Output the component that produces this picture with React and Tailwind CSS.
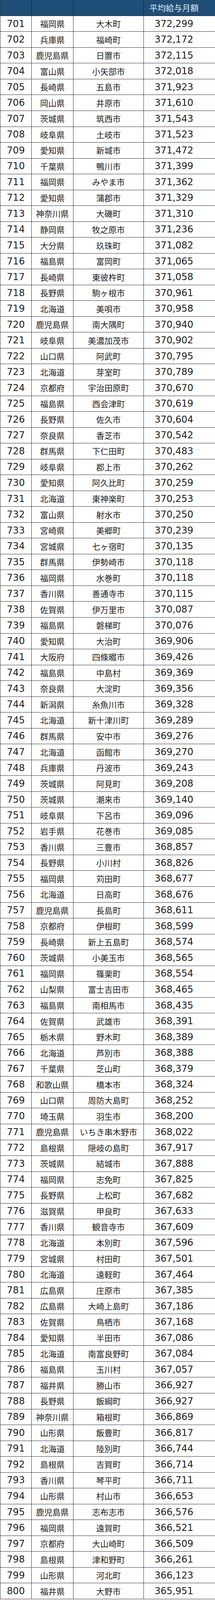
import React from 'react';

// 平均給与月額ランキング 701〜800位
const rows = [
  ['福岡県', '大木町', '372,299'],
  ['兵庫県', '福崎町', '372,172'],
  ['鹿児島県', '日置市', '372,115'],
  ['富山県', '小矢部市', '372,018'],
  ['長崎県', '五島市', '371,923'],
  ['岡山県', '井原市', '371,610'],
  ['茨城県', '筑西市', '371,543'],
  ['岐阜県', '土岐市', '371,523'],
  ['愛知県', '新城市', '371,472'],
  ['千葉県', '鴨川市', '371,399'],
  ['福岡県', 'みやま市', '371,362'],
  ['愛知県', '蒲郡市', '371,329'],
  ['神奈川県', '大磯町', '371,310'],
  ['静岡県', '牧之原市', '371,236'],
  ['大分県', '玖珠町', '371,082'],
  ['福島県', '富岡町', '371,065'],
  ['長崎県', '東彼杵町', '371,058'],
  ['長野県', '駒ヶ根市', '370,961'],
  ['北海道', '美唄市', '370,958'],
  ['鹿児島県', '南大隅町', '370,940'],
  ['岐阜県', '美濃加茂市', '370,902'],
  ['山口県', '阿武町', '370,795'],
  ['北海道', '芽室町', '370,789'],
  ['京都府', '宇治田原町', '370,670'],
  ['福島県', '西会津町', '370,619'],
  ['長野県', '佐久市', '370,604'],
  ['奈良県', '香芝市', '370,542'],
  ['群馬県', '下仁田町', '370,483'],
  ['岐阜県', '郡上市', '370,262'],
  ['愛知県', '阿久比町', '370,259'],
  ['北海道', '東神楽町', '370,253'],
  ['富山県', '射水市', '370,250'],
  ['宮崎県', '美郷町', '370,239'],
  ['宮城県', '七ヶ宿町', '370,135'],
  ['群馬県', '伊勢崎市', '370,118'],
  ['福岡県', '水巻町', '370,118'],
  ['香川県', '善通寺市', '370,115'],
  ['佐賀県', '伊万里市', '370,087'],
  ['福島県', '磐梯町', '370,076'],
  ['愛知県', '大治町', '369,906'],
  ['大阪府', '四條畷市', '369,426'],
  ['福島県', '中島村', '369,369'],
  ['奈良県', '大淀町', '369,356'],
  ['新潟県', '糸魚川市', '369,328'],
  ['北海道', '新十津川町', '369,289'],
  ['群馬県', '安中市', '369,276'],
  ['北海道', '函館市', '369,270'],
  ['兵庫県', '丹波市', '369,243'],
  ['茨城県', '阿見町', '369,208'],
  ['茨城県', '潮来市', '369,140'],
  ['岐阜県', '下呂市', '369,096'],
  ['岩手県', '花巻市', '369,085'],
  ['香川県', '三豊市', '368,857'],
  ['長野県', '小川村', '368,826'],
  ['福岡県', '苅田町', '368,677'],
  ['北海道', '日高町', '368,676'],
  ['鹿児島県', '長島町', '368,611'],
  ['京都府', '伊根町', '368,599'],
  ['長崎県', '新上五島町', '368,574'],
  ['茨城県', '小美玉市', '368,565'],
  ['福岡県', '篠栗町', '368,554'],
  ['山梨県', '富士吉田市', '368,465'],
  ['福島県', '南相馬市', '368,435'],
  ['佐賀県', '武雄市', '368,391'],
  ['栃木県', '野木町', '368,389'],
  ['北海道', '芦別市', '368,388'],
  ['千葉県', '芝山町', '368,379'],
  ['和歌山県', '橋本市', '368,324'],
  ['山口県', '周防大島町', '368,252'],
  ['埼玉県', '羽生市', '368,200'],
  ['鹿児島県', 'いちき串木野市', '368,022'],
  ['島根県', '隠岐の島町', '367,917'],
  ['茨城県', '結城市', '367,888'],
  ['福岡県', '志免町', '367,825'],
  ['長野県', '上松町', '367,682'],
  ['滋賀県', '甲良町', '367,633'],
  ['香川県', '観音寺市', '367,609'],
  ['北海道', '本別町', '367,596'],
  ['宮城県', '村田町', '367,501'],
  ['北海道', '遠軽町', '367,464'],
  ['広島県', '庄原市', '367,385'],
  ['広島県', '大崎上島町', '367,186'],
  ['佐賀県', '鳥栖市', '367,168'],
  ['愛知県', '半田市', '367,086'],
  ['北海道', '南富良野町', '367,084'],
  ['福島県', '玉川村', '367,057'],
  ['福井県', '勝山市', '366,927'],
  ['長野県', '飯綱町', '366,927'],
  ['神奈川県', '箱根町', '366,869'],
  ['山形県', '飯豊町', '366,817'],
  ['北海道', '陸別町', '366,744'],
  ['島根県', '吉賀町', '366,714'],
  ['香川県', '琴平町', '366,711'],
  ['山形県', '村山市', '366,653'],
  ['鹿児島県', '志布志市', '366,576'],
  ['福岡県', '遠賀町', '366,521'],
  ['京都府', '大山崎町', '366,509'],
  ['島根県', '津和野町', '366,261'],
  ['山形県', '河北町', '366,123'],
  ['福井県', '大野市', '365,951'],
];

const cols = 'grid grid-cols-[80px_107px_180px_183px]';
const jp = "font-['Noto_Sans_CJK_JP',sans-serif] text-[21px]";
const num = "font-['DejaVu_Sans',sans-serif] text-[24px]";

export default function App() {
  return (
    <div className="w-[550px] bg-white text-[#1e1e1e]">
      <div className="border-l border-[#333]">
        {/* ヘッダー */}
        <div className={`${cols} h-[40.8px] box-border overflow-hidden bg-[#1f4e79] border-b border-[#222]`}>
          <div className="border-r border-[#1a1a1a]" />
          <div className="border-r border-[#1a1a1a]" />
          <div className="border-r border-[#1a1a1a]" />
          <div className={`flex items-center justify-center pr-[29px] text-[#e3e9f1] ${jp} leading-none`}>
            平均給与月額
          </div>
        </div>

        {rows.map(([pref, city, amount], i) => (
          <div key={i} className={`${cols} h-[40.54px] box-border overflow-hidden border-b border-[#333]`}>
            <div className={`flex items-center justify-center border-r border-[#333] ${num} leading-none`}>
              {701 + i}
            </div>
            <div className={`flex items-center justify-center border-r border-[#333] ${jp} leading-none whitespace-nowrap`}>
              {pref}
            </div>
            <div className={`flex items-center justify-center border-r border-[#333] ${jp} leading-none whitespace-nowrap`}>
              {city}
            </div>
            <div className={`flex items-center justify-center pr-[29px] ${num} leading-none`}>
              {amount}
            </div>
          </div>
        ))}
      </div>
    </div>
  );
}
